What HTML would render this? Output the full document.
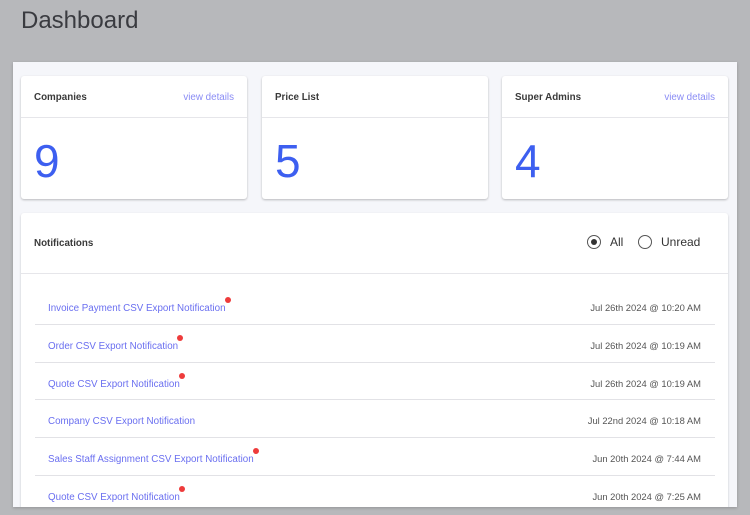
<!DOCTYPE html>
<html><head><meta charset="utf-8"><style>
*{margin:0;padding:0;box-sizing:border-box}
body{width:750px;height:515px;background:#b7b8bb;font-family:"Liberation Sans",sans-serif;position:relative;overflow:hidden}
h1{position:absolute;left:21px;top:7px;font-weight:normal;font-size:24px;color:#3a3b40}
.panel{position:absolute;left:13px;top:62px;width:724px;height:445px;background:#f5f6fa;box-shadow:0 1px 3px rgba(0,0,0,.2);overflow:hidden}
.card{position:absolute;background:#fff;border-radius:3px;box-shadow:0 1px 2px rgba(0,0,0,.25)}
.ch{height:42px;border-bottom:1px solid #e6e6ea;position:relative}
.ct{position:absolute;left:13px;top:16px;font-size:9.8px;font-weight:bold;color:#3a3a3a}
.vd{position:absolute;right:13px;top:16px;font-size:9.8px;color:#8a8cf5}
.num{position:absolute;left:13px;top:58px;font-size:46px;color:#3d5ff0}
.notif{position:absolute;left:8px;top:151px;width:707px;height:310px;background:#fff;border-radius:3px;box-shadow:0 1px 2px rgba(0,0,0,.2)}
.nh{height:61px;border-bottom:1px solid #e6e6ea;position:relative}
.radio{position:absolute;top:22px;font-size:12px;color:#333}
.rc{display:inline-block;width:14px;height:14px;border:1.5px solid #555;border-radius:50%;vertical-align:-3px;margin-right:9px;position:relative}
.rc.on::after{content:"";position:absolute;left:2.5px;top:2.5px;width:6px;height:6px;border-radius:50%;background:#333}
.row{position:absolute;left:14px;width:680px;height:38px;border-bottom:1px solid #e2e2e6}
.row .l{position:absolute;left:13px;top:16px;font-size:9.8px;color:#6a6ff0}
.row .l i{position:absolute;right:-5px;top:-6px;width:6px;height:6px;border-radius:50%;background:#ee3b3b}
.row .d{position:absolute;right:14px;top:15px;font-size:9.4px;color:#555}
</style></head><body>
<h1>Dashboard</h1>
<div class="panel">
<div class="card" style="left:8px;top:14px;width:226px;height:123px"><div class="ch"><span class="ct">Companies</span><span class="vd">view details</span></div><div class="num">9</div></div>
<div class="card" style="left:249px;top:14px;width:226px;height:123px"><div class="ch"><span class="ct">Price List</span></div><div class="num">5</div></div>
<div class="card" style="left:489px;top:14px;width:226px;height:123px"><div class="ch"><span class="ct">Super Admins</span><span class="vd">view details</span></div><div class="num">4</div></div>
<div class="notif">
<div class="nh"><span class="ct" style="top:25px">Notifications</span>
<span class="radio" style="left:566px"><span class="rc on"></span>All</span>
<span class="radio" style="left:617px"><span class="rc"></span>Unread</span></div>
<div class="row" style="top:74px;height:38px"><span class="l">Invoice Payment CSV Export Notification<i></i></span><span class="d">Jul 26th 2024 @ 10:20 AM</span></div>
<div class="row" style="top:112px"><span class="l">Order CSV Export Notification<i></i></span><span class="d">Jul 26th 2024 @ 10:19 AM</span></div>
<div class="row" style="top:150px;height:37px"><span class="l">Quote CSV Export Notification<i></i></span><span class="d">Jul 26th 2024 @ 10:19 AM</span></div>
<div class="row" style="top:187px"><span class="l">Company CSV Export Notification</span><span class="d">Jul 22nd 2024 @ 10:18 AM</span></div>
<div class="row" style="top:225px"><span class="l">Sales Staff Assignment CSV Export Notification<i></i></span><span class="d">Jun 20th 2024 @ 7:44 AM</span></div>
<div class="row" style="top:263px;border:none"><span class="l">Quote CSV Export Notification<i></i></span><span class="d">Jun 20th 2024 @ 7:25 AM</span></div>
</div>
</div>
</body></html>
